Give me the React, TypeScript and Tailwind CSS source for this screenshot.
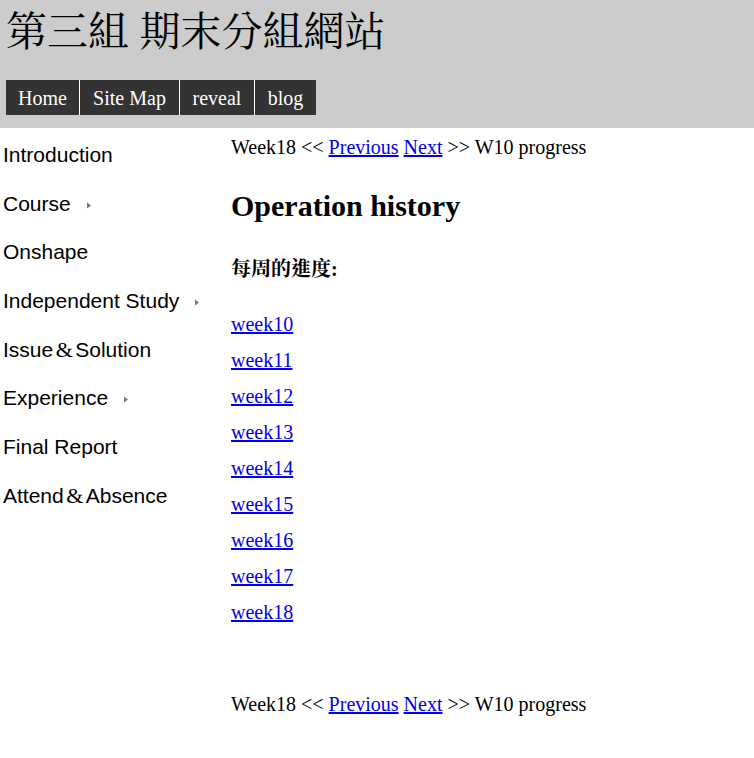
import React from "react";

const serif = { fontFamily: '"Liberation Serif", "Noto Serif CJK TC", "Noto Sans CJK TC", serif' };

function Tri() {
  return (
    <svg width="4" height="7" viewBox="0 0 4 7" className="inline-block ml-[16px] align-middle">
      <path d="M0 0.5 L4 3.5 L0 6.5 Z" fill="#777" />
    </svg>
  );
}

function Amp() {
  return (
    <span className="inline-block w-[22px] text-center text-[22px]" style={{ fontFamily: '"Liberation Serif", serif' }}>
      &amp;
    </span>
  );
}

function PageNav() {
  return (
    <div className="text-[20px] leading-[22px] text-black">
      Week18 &lt;&lt; <a className="text-[#0000ee] underline">Previous</a>{" "}
      <a className="text-[#0000ee] underline">Next</a> &gt;&gt; W10 progress
    </div>
  );
}

export default function App() {
  const side: React.ReactNode[] = [
    <>Introduction</>,
    <>Course<Tri /></>,
    <>Onshape</>,
    <>Independent Study<Tri /></>,
    <>Issue<Amp />Solution</>,
    <>Experience<Tri /></>,
    <>Final Report</>,
    <>Attend<Amp />Absence</>,
  ];
  const weeks = ["week10", "week11", "week12", "week13", "week14", "week15", "week16", "week17", "week18"];
  const navItems: [string, string][] = [
    ["Home", "w-[73px]"],
    ["Site Map", "w-[100px] border-l border-white"],
    ["reveal", "w-[75px] border-l border-white"],
    ["blog", "w-[62px] border-l border-white"],
  ];
  return (
    <div className="w-[754px] h-[758px] bg-white overflow-hidden" style={serif}>
      <header className="bg-[#cccccc] h-[128px] flex flex-col">
        <h1
          className="text-[41px] leading-[46px] pl-[6px] pt-[6px] font-normal text-black"
          style={{ fontFamily: '"Noto Serif CJK TC", "Noto Sans CJK TC", serif' }}
        >
          第三組 期末分組網站
        </h1>
        <nav className="flex mt-[28px] ml-[6px] h-[35px]">
          {navItems.map(([t, w]) => (
            <div key={t} className={`${w} bg-[#333333] text-white text-[20px] flex items-center justify-center`}>
              {t}
            </div>
          ))}
        </nav>
      </header>
      <div className="flex">
        <aside className="w-[231px] shrink-0 pt-[15px] pl-[3px] text-[21px] text-black" style={{ fontFamily: '"Liberation Sans", Arial, sans-serif' }}>
          {side.map((s, i) => (
            <div key={i} className="h-[48.7px] leading-[24px]">{s}</div>
          ))}
        </aside>
        <main className="flex-1 pt-[8px]">
          <PageNav />
          <h2 className="text-[30px] font-bold leading-[34px] mt-[31px]">Operation history</h2>
          <h3 className="text-[20px] font-bold leading-[24px] mt-[34px]">每周的進度:</h3>
          <div className="mt-[32px] flex flex-col">
            {weeks.map((w) => (
              <a key={w} className="text-[20px] leading-[22px] h-[36px] text-[#0000ee] underline">
                {w}
              </a>
            ))}
          </div>
          <div className="mt-[56px]">
            <PageNav />
          </div>
        </main>
      </div>
    </div>
  );
}
